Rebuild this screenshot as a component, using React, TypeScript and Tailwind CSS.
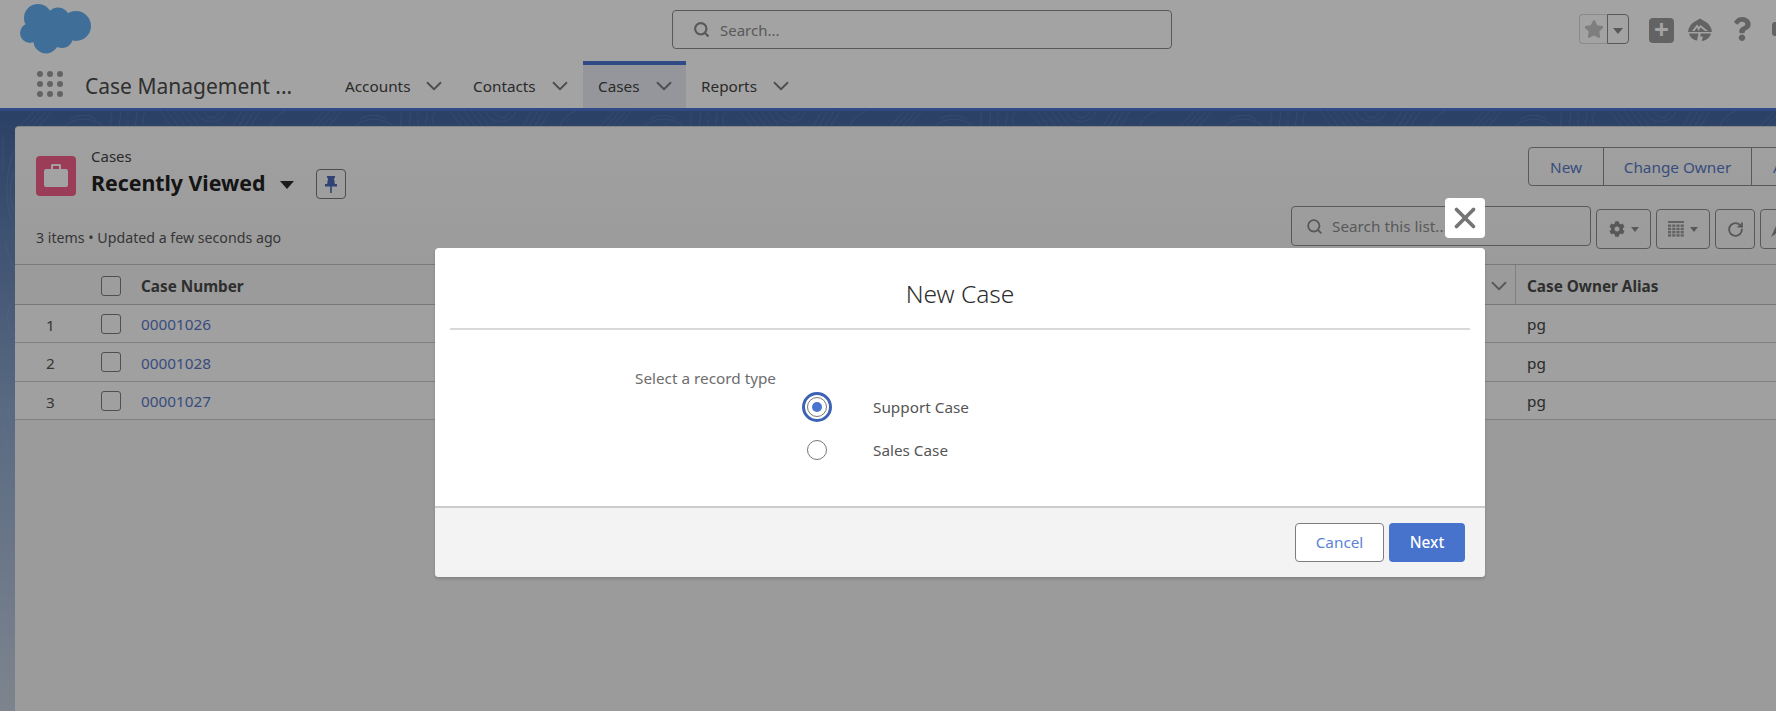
import { ChevronDown, Search, RotateCw, X } from "lucide-react";
import { FaCog, FaStar, FaQuestion } from "react-icons/fa";

const NAV = [
  { label: "Accounts", box: "w-[128px] pt-[15px]" },
  { label: "Contacts", box: "w-[110px] pt-[15px]" },
  { label: "Cases", box: "w-[103px] border-t-[4px] border-[#4a75cf] bg-[#e9ebf2] pl-[15px] pt-[11px]" },
  { label: "Reports", box: "w-[118px] pl-[15px] pt-[15px]" },
];

const ROWS = [
  { n: 1, id: "00001026", h: "h-[38px]" },
  { n: 2, id: "00001028", h: "h-[39px]" },
  { n: 3, id: "00001027", h: "h-[38px]" },
];

// one stretch of the topographic lines in the band, repeated along it
const CONTOUR =
  "M20 16L34 0M26 16L40 0M32 16L46 0M38 16L52 0" +
  "M70 8C78 3 88 3 96 8M64 16C74 6 90 6 102 14" +
  "M112 0C110 6 112 10 110 16M120 0C122 6 118 10 120 16M128 0V5M128 9V16M136 0C139 6 134 10 136 16M146 0C142 6 142 10 145 16" +
  "M160 0L172 16M167 0L179 16M174 0L186 16M181 0L193 16M188 0L198 14" +
  "M196 0C200 14 222 14 226 0M204 0C208 9 216 9 220 0" +
  "M232 16C238 8 238 6 242 0M238 16C244 8 244 6 248 0M244 16C250 8 250 6 254 0M250 16C256 8 256 6 260 0" +
  "M270 16C272 8 278 3 286 0";

function Contours() {
  return (
    <svg className="absolute inset-0 w-full h-full" fill="none" stroke="#a9c0ea" strokeWidth="1" strokeOpacity="0.16">
      {[0, 1, 2, 3, 4, 5, 6].map((i) => (
        <path key={i} d={CONTOUR} transform={`translate(${i * 290} 0)`} />
      ))}
      <path d="M14 40C6 60 4 90 12 110M14 60C9 75 9 90 14 100M3 24V60M5 130C9 150 14 155 15 160M15 190C6 195 4 215 15 225M4 240L15 228M2 250L15 236M0 300C6 330 8 340 14 360M8 300C12 320 13 325 15 335" />
    </svg>
  );
}

function Logo() {
  return (
    <svg width="72" height="50" viewBox="0 0 72 50" fill="#63aeef">
      <circle cx="18" cy="14" r="14" />
      <circle cx="38" cy="15" r="11.5" />
      <circle cx="56" cy="22" r="15" />
      <circle cx="10" cy="29" r="10" />
      <circle cx="26" cy="37" r="12.5" />
      <circle cx="42" cy="33" r="11" />
      <rect x="14" y="14" width="40" height="20" />
    </svg>
  );
}

function Waffle() {
  return (
    <div className="grid grid-cols-3 gap-[4px] w-[26px]">
      {[0, 1, 2, 3, 4, 5, 6, 7, 8].map((i) => (
        <span key={i} className="w-[6px] h-[6px] rounded-full bg-[#9c9c9c]" />
      ))}
    </div>
  );
}

function TableIcon() {
  return (
    <svg width="16" height="16" viewBox="0 0 16 16" fill="#9c9c9c">
      <rect x="0" y="0" width="16" height="2" />
      {[3.5, 6.8, 10, 13.2].map((y) =>
        [0, 4.2, 8.4, 12.6].map((x) => <rect key={`${x}-${y}`} x={x} y={y} width="3.2" height="2.4" />)
      )}
    </svg>
  );
}

function PinIcon() {
  return (
    <svg width="12" height="17" viewBox="0 0 12 17" fill="#4a6bb5">
      <path d="M2 0h8v2H9l.8 6H12v2.6H0V8h2.2L3 2H2z" />
      <rect x="5.2" y="10" width="1.6" height="7" />
    </svg>
  );
}

function TrailIcon() {
  return (
    <svg width="24" height="24" viewBox="0 0 24 24" fill="#9c9c9c">
      <path d="M12 0.5 L17 3.5 C21 5.5 23.5 9 24 14 H0 C0.5 9 3 5.5 7 3.5 Z" />
      <path d="M4 13 L9 6.5 L11 9 L12.5 7 L20 13 H17 L12.5 9.5 L10.5 13 L9 9.5 L6.5 13 Z" fill="#ffffff" />
      <path d="M1 15.5 H10.5 L9 22.5 C5 22 2 19.5 1 15.5 Z" />
      <path d="M13 15.5 H23 C22 19.5 18.5 22.5 13.5 23 L15 19 L12 18 Z" />
    </svg>
  );
}

export default function App() {
  return (
    <div className="relative flex flex-col h-[711px] w-full overflow-hidden bg-white font-['Noto_Sans',sans-serif] text-[15.3px] text-[#444444]">
      {/* global header */}
      <header className="shrink-0 h-[111px] border-b-[3px] border-[#4a75cf] bg-white">
        <div className="flex h-[61px] items-start">
          <div className="shrink-0 w-[672px] pl-[20px] pt-[4px]">
            <Logo />
          </div>
          <div className="shrink-0 mt-[10px] w-[500px] h-[39px] flex items-center gap-[10px] pl-[20px] border border-[#8c8c8c] rounded-[4px] text-[#8c8c8c]">
            <Search size={17} strokeWidth={3} color="#8a8a8a" />
            <span className="pt-[1px] text-[15px]">Search...</span>
          </div>
          <div className="shrink-0 ml-[407px] mt-[14px] flex items-start">
            <div className="flex h-[30px] w-[50px]">
              <div className="w-[29px] flex items-center justify-center border border-r-0 border-[#d8d8d8] rounded-l-[4px]">
                <FaStar size={20} color="#c6c6c6" />
              </div>
              <div className="w-[22px] flex items-center justify-center border border-[#8c8c8c] rounded-r-[4px]">
                <span className="mt-[3px] border-x-[5px] border-t-[6px] border-x-transparent border-t-[#8c8c8c]" />
              </div>
            </div>
            <div className="ml-[20px] mt-[4px] w-[25px] h-[25px] rounded-[4px] bg-[#9c9c9c] flex items-center justify-center">
              <span className="text-white text-[26px] leading-none font-bold mt-[-3px]">+</span>
            </div>
            <div className="ml-[14px] mt-[4px]">
              <TrailIcon />
            </div>
            <div className="ml-[18px] mt-[3px]">
              <FaQuestion size={24} color="#9c9c9c" />
            </div>
            <div className="ml-[18px] mt-[8px] w-[14px] h-[14px] rounded-[3px] bg-[#9c9c9c]" />
          </div>
        </div>
        <nav className="flex h-[47px] items-stretch">
          <div className="w-[85px] pl-[37px] pt-[10px] shrink-0">
            <Waffle />
          </div>
          <div className="w-[260px] shrink-0 pt-[10px] text-[21px] leading-[30px] text-[#4b4b4b]">Case Management ...</div>
          {NAV.map((item) => (
            <div key={item.label} className={`${item.box} shrink-0 flex items-start gap-[11px]`}>
              <span className="leading-[20px]">{item.label}</span>
              <ChevronDown size={26} strokeWidth={1.7} color="#7a7a7a" className="mt-[-3px]" />
            </div>
          ))}
        </nav>
      </header>

      {/* blue band + record list */}
      <div className="relative flex-1 min-h-0 pt-[15px] pl-[15px] bg-gradient-to-b from-[#44669f] via-[#8da6cc] to-[#c4cfdd]">
        <Contours />
        <main className="relative w-[1790px] h-full rounded-t-[4px] bg-[#f3f3f3] border-t border-[#d5d5d5]">
          <div className="flex h-[137px] bg-gradient-to-b from-[#fbfbfb] to-[#f3f3f3] rounded-t-[4px]">
            <div className="shrink-0 w-[1276px] pl-[21px] pt-[29px]">
              <div className="flex">
                <div className="w-[40px] h-[40px] rounded-[4px] bg-[#f35e8a] flex items-center justify-center">
                  <div className="relative w-[24px] h-[18px] mt-[3px] rounded-[2px] bg-white">
                    <span className="absolute top-[-5px] left-[7px] w-[10px] h-[5px] border-2 border-b-0 border-white rounded-t-[2px]" />
                  </div>
                </div>
                <div className="ml-[15px] mt-[-10px]">
                  <div className="text-[15px] leading-[20px]">Cases</div>
                  <div className="flex items-center h-[30px] mt-[2px]">
                    <span className="text-[21.3px] font-bold text-[#222222]">Recently Viewed</span>
                    <span className="ml-[15px] mt-[4px] border-x-[7px] border-t-[8px] border-x-transparent border-t-[#2b2b2b]" />
                    <div className="ml-[22px] mt-[2px] w-[30px] h-[30px] flex items-center justify-center rounded-[4px] border border-[#777777]">
                      <PinIcon />
                    </div>
                  </div>
                </div>
              </div>
              <div className="mt-[30px] text-[14.2px] leading-[20px] text-[#555555]">3 items • Updated a few seconds ago</div>
            </div>
            <div className="shrink-0 pt-[20px]">
              <div className="ml-[237px] flex h-[39px] w-[300px] border border-[#8c8c8c] rounded-l-[4px] text-[#5878c5]">
                <div className="w-[75px] pt-[1px] flex items-center justify-center border-r border-[#8c8c8c]">New</div>
                <div className="w-[148px] pt-[1px] flex items-center justify-center border-r border-[#8c8c8c]">Change Owner</div>
                <div className="flex-1 pl-[21px] pt-[1px] flex items-center">Assign</div>
              </div>
              <div className="flex items-start mt-[20px]">
                <div className="w-[300px] h-[40px] flex items-center gap-[9px] pl-[14px] border border-[#8c8c8c] rounded-[4px] text-[#8c8c8c]">
                  <Search size={17} strokeWidth={2.6} color="#8a8a8a" />
                  <span>Search this list...</span>
                </div>
                <div className="ml-[5px] mt-[3px] w-[55px] h-[40px] flex items-center justify-center gap-[6px] border border-[#8c8c8c] rounded-[4px]">
                  <FaCog size={16} color="#8a8a8a" />
                  <span className="border-x-[4px] border-t-[5px] border-x-transparent border-t-[#8a8a8a]" />
                </div>
                <div className="ml-[5px] mt-[3px] w-[54px] h-[40px] flex items-center justify-center gap-[6px] border border-[#8c8c8c] rounded-[4px]">
                  <TableIcon />
                  <span className="border-x-[4px] border-t-[5px] border-x-transparent border-t-[#8a8a8a]" />
                </div>
                <div className="ml-[5px] mt-[3px] w-[40px] h-[40px] flex items-center justify-center border border-[#8c8c8c] rounded-[4px]">
                  <RotateCw size={17} strokeWidth={2.6} color="#8a8a8a" />
                </div>
                <div className="ml-[5px] mt-[3px] w-[40px] h-[40px] pl-[10px] pt-[13px] border border-[#8c8c8c] rounded-[4px]">
                  <svg width="14" height="14" viewBox="0 0 14 14" fill="#8a8a8a">
                    <path d="M0 14L5 3L7 9Z" />
                  </svg>
                </div>
              </div>
            </div>
          </div>

          <div className="grid grid-cols-[76px_50px_1375px_1fr] h-[41px] items-center border-y border-[#bdbdbd]">
            <div />
            <div className="pl-[10px] pt-[2px]">
              <span className="block w-[20px] h-[20px] rounded-[3px] border border-[#7d7d7d] bg-white/30" />
            </div>
            <div className="flex items-center justify-between h-full border-r border-[#c8c8c8] pr-[3px] pt-[3px] font-bold text-[#4a4a4a]">
              <span>Case Number</span>
              <ChevronDown size={26} strokeWidth={1.7} color="#8a8a8a" />
            </div>
            <div className="pl-[11px] pt-[3px] font-bold text-[#4a4a4a]">Case Owner Alias</div>
          </div>
          {ROWS.map((row) => (
            <div key={row.n} className={`grid grid-cols-[76px_50px_1375px_1fr] ${row.h} items-center border-b border-[#c8c8c8] bg-[#fafafa]`}>
              <div className="pl-[31px] pt-[3px] text-[#555555]">{row.n}</div>
              <div className="pl-[10px]">
                <span className="block w-[20px] h-[20px] rounded-[3px] border border-[#7d7d7d]" />
              </div>
              <div className="pt-[2px] text-[#5878c5]">{row.id}</div>
              <div className="pl-[11px] pt-[2px]">pg</div>
            </div>
          ))}
        </main>
      </div>

      {/* backdrop */}
      <div className="absolute inset-0 bg-black/[0.36]" />

      {/* modal */}
      <div className="absolute left-[435px] top-[198px] w-[1050px]">
        <div className="flex justify-end">
          <button className="w-[40px] h-[40px] flex items-center justify-center rounded-[4px] bg-white">
            <X size={34} strokeWidth={2.6} color="#747474" />
          </button>
        </div>
        <div className="mt-[10px] h-[329px] flex flex-col rounded-[4px] bg-white overflow-hidden shadow-[0_2px_3px_rgba(0,0,0,0.16)]">
          <div className="mx-[15px] h-[82px] shrink-0 flex items-center justify-center pt-[13px] border-b-2 border-[#d9d9d9] text-[24.5px] font-light text-[#2e2e2e]">
            New Case
          </div>
          <div className="flex-1 min-h-0 pl-[200px] pt-[38px] text-[#6d6d6d]">
            <div className="leading-[20px]">Select a record type</div>
            <div className="ml-[167px] mt-[3px] flex items-center h-[32px]">
              <span className="w-[30px] h-[30px] flex items-center justify-center rounded-full border-[3px] border-[#3d62b4]">
                <span className="w-[20px] h-[20px] flex items-center justify-center rounded-full border border-[#777777]">
                  <span className="w-[10px] h-[10px] rounded-full bg-[#4a75cf]" />
                </span>
              </span>
              <span className="ml-[41px] text-[#555555]">Support Case</span>
            </div>
            <div className="ml-[167px] mt-[11px] flex items-center h-[32px]">
              <span className="ml-[5px] w-[20px] h-[20px] rounded-full border border-[#777777]" />
              <span className="ml-[46px] text-[#555555]">Sales Case</span>
            </div>
          </div>
          <div className="shrink-0 h-[71px] flex items-start justify-end gap-[5px] pt-[15px] pr-[20px] border-t-2 border-[#cccccc] bg-[#f3f3f3]">
            <button className="w-[89px] h-[39px] rounded-[4px] border border-[#7d7d7d] bg-white text-[#5b83d6]">Cancel</button>
            <button className="w-[76px] h-[39px] rounded-[4px] bg-[#4773cc] font-medium text-white">Next</button>
          </div>
        </div>
      </div>
    </div>
  );
}
